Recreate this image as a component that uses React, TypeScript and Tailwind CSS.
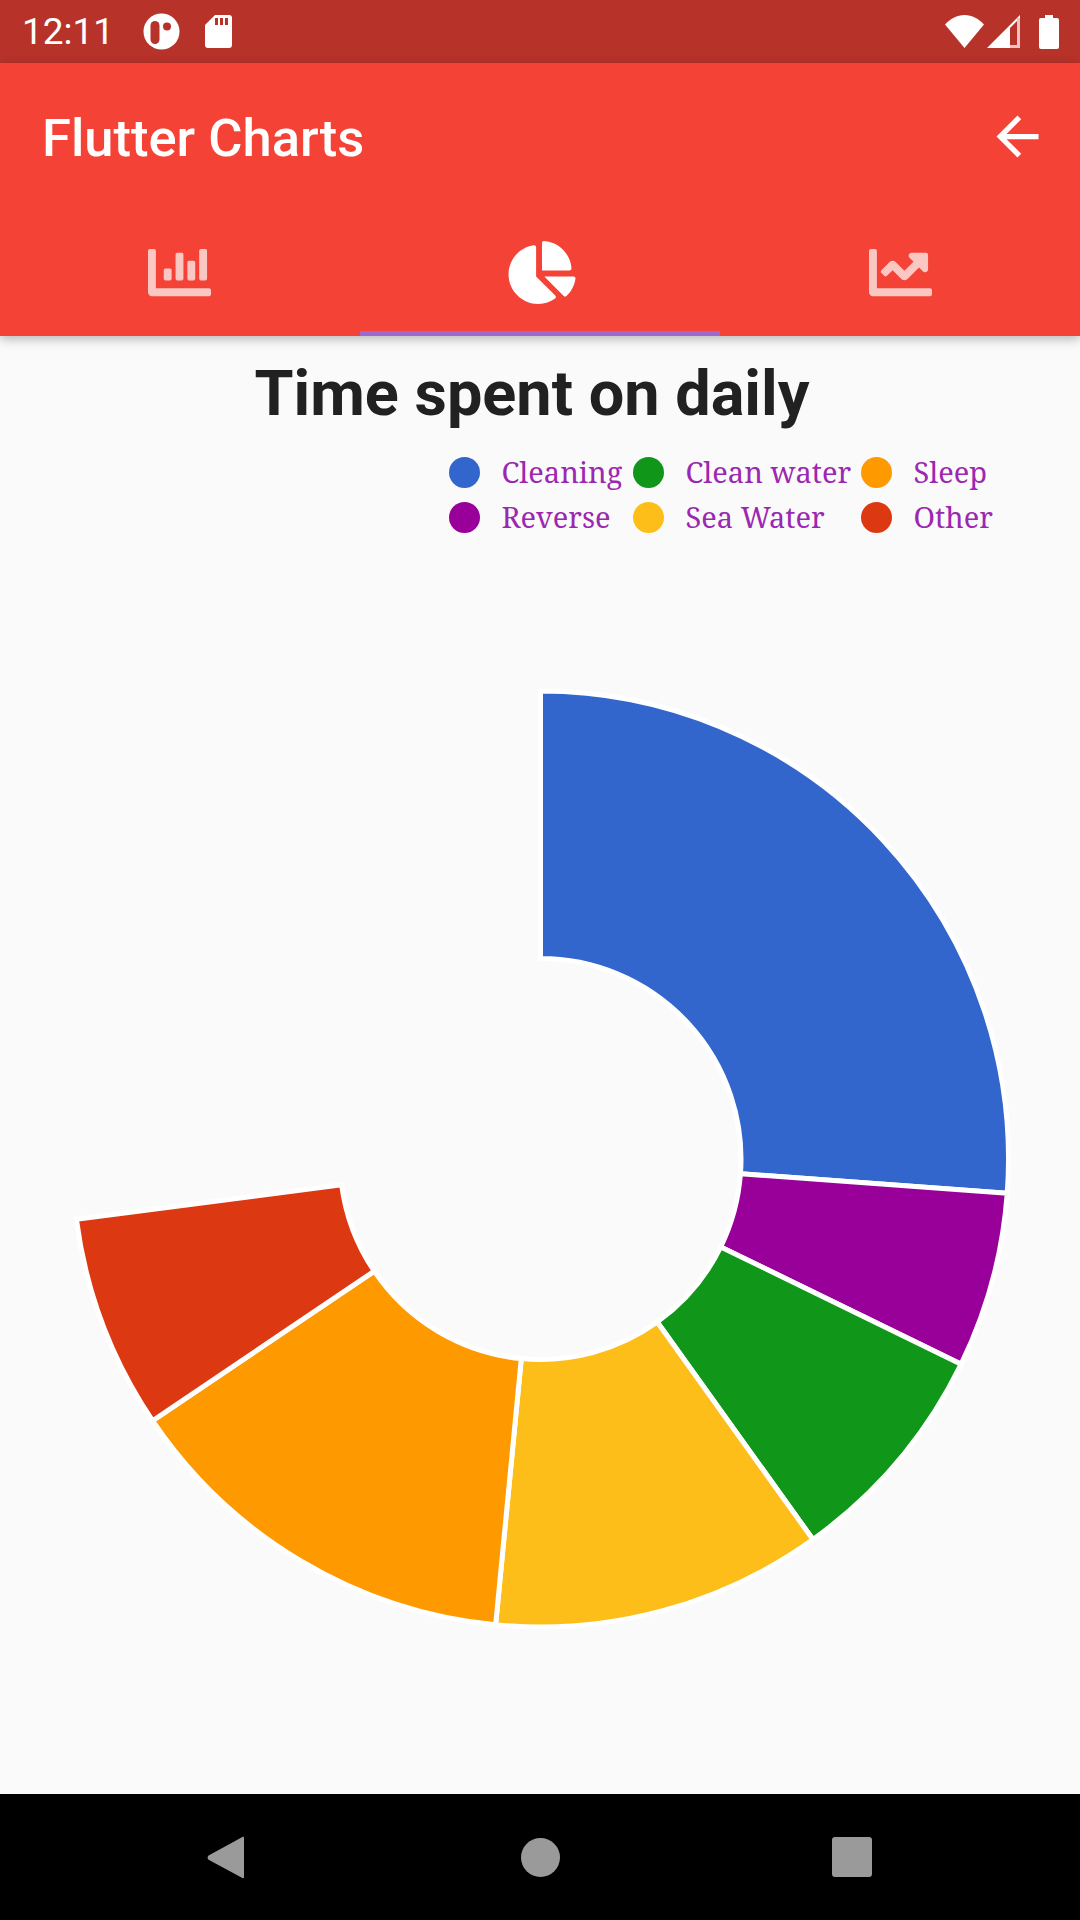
import React from 'react';
import { FaChartBar, FaChartLine, FaChartPie } from 'react-icons/fa';
import { MdArrowBack } from 'react-icons/md';

const CX = 540.5;
const CY = 478;
const OUTER = 468;
const INNER = 200.5;

const slices = [
  { label: 'Cleaning', color: '#3366cc', from: -90, to: 4.2 },
  { label: 'Reverse', color: '#990099', from: 4.2, to: 26 },
  { label: 'Clean water', color: '#109618', from: 26, to: 54.4 },
  { label: 'Sea Water', color: '#fdbe19', from: 54.4, to: 95.5 },
  { label: 'Sleep', color: '#ff9900', from: 95.5, to: 146 },
  { label: 'Other', color: '#dc3912', from: 146, to: 172.6 },
];

const legend = [
  { label: 'Cleaning', color: '#3366cc' },
  { label: 'Clean water', color: '#109618' },
  { label: 'Sleep', color: '#ff9900' },
  { label: 'Reverse', color: '#990099' },
  { label: 'Sea Water', color: '#fdbe19' },
  { label: 'Other', color: '#dc3912' },
];

const point = (r: number, deg: number) => {
  const a = (deg * Math.PI) / 180;
  return `${(CX + r * Math.cos(a)).toFixed(2)} ${(CY + r * Math.sin(a)).toFixed(2)}`;
};

const slicePath = (from: number, to: number) => {
  const large = to - from > 180 ? 1 : 0;
  return `M${point(INNER, from)} L${point(OUTER, from)} A${OUTER} ${OUTER} 0 ${large} 1 ${point(OUTER, to)} L${point(INNER, to)} A${INNER} ${INNER} 0 ${large} 0 ${point(INNER, from)} Z`;
};

const StatusBar = () => (
  <div className="h-[63px] bg-[#b73229] flex items-center pl-[22px] pr-[21px] text-white">
    <span className="font-['Roboto'] text-[37px] leading-none w-[121px]">12:11</span>
    <svg width="37" height="37" viewBox="0 0 37 37" className="mr-[25px]">
      <circle cx="18.5" cy="18.5" r="18" fill="#fff" />
      <rect x="7.5" y="8" width="9" height="23" rx="4.5" fill="#b73229" />
      <circle cx="24" cy="13.5" r="4" fill="#b73229" />
    </svg>
    <svg width="27" height="33" viewBox="0 0 27 33">
      <path d="M10 0h14a3 3 0 0 1 3 3v27a3 3 0 0 1-3 3H3a3 3 0 0 1-3-3V10z" fill="#fff" />
      <rect x="10" y="3" width="3" height="7" fill="#b73229" />
      <rect x="15" y="3" width="3" height="7" fill="#b73229" />
      <rect x="20" y="3" width="3" height="7" fill="#b73229" />
    </svg>
    <div className="ml-auto flex items-center">
      <svg width="39" height="33" viewBox="0 0 39 33" className="mr-[3px]">
        <path d="M19.5 33L0 9.5C5 4 12 0 19.5 0S34 4 39 9.5z" fill="#fff" />
      </svg>
      <svg width="33" height="33" viewBox="0 0 33 33" className="mr-[19px]">
        <path d="M33 0v33H0z" fill="#fff" />
        <path d="M23 13l7-7v24h-7z" fill="#b73229" />
        <path d="M30 3h3v30H23v-3h7z" fill="#eec4c0" />
      </svg>
      <svg width="20" height="34" viewBox="0 0 20 34">
        <path d="M6 0h8v3h4a2 2 0 0 1 2 2v27a2 2 0 0 1-2 2H2a2 2 0 0 1-2-2V5a2 2 0 0 1 2-2h4z" fill="#fff" />
      </svg>
    </div>
  </div>
);

const AppBar = () => (
  <div className="bg-[#f44336] text-white shadow-[0_3px_10px_rgba(0,0,0,0.28)] relative">
    <div className="h-[147px] flex items-center justify-between pl-[42px] pr-[31px]">
      <span className="font-['Roboto'] font-medium text-[52.5px] leading-none mt-[3px]">Flutter Charts</span>
      <MdArrowBack size={63} />
    </div>
    <div className="grid grid-cols-3 h-[126px]">
      <div className="flex items-center justify-center pb-[2px] pr-[2px]">
        <FaChartBar size={63} className="opacity-70" />
      </div>
      <div className="relative flex items-center justify-center pb-[2px] pl-[4px]">
        <FaChartPie className="w-[68px] h-[63px]" />
        <span className="absolute left-0 right-0 bottom-0 h-[5px] bg-[#9c69d1]" />
      </div>
      <div className="flex items-center justify-center pb-[2px]">
        <FaChartLine size={63} className="opacity-70" />
      </div>
    </div>
  </div>
);

const NavBar = () => (
  <div className="h-[126px] bg-black flex items-center pl-[207px]">
    <svg width="38" height="43" viewBox="0 0 38 43" className="mr-[276px]">
      <path d="M37 1.5v40a1 1 0 0 1-1.6.4L1.6 23.8a3 3 0 0 1 0-4.2L35.4 1a1 1 0 0 1 1.6.5z" fill="#9a9a9a" />
    </svg>
    <div className="w-[39px] h-[39px] rounded-full bg-[#9a9a9a] mr-[272px]" />
    <div className="w-[40px] h-[40px] rounded-[3px] bg-[#9a9a9a]" />
  </div>
);

export default function App() {
  return (
    <div className="w-[1080px] h-[1920px] flex flex-col bg-[#fafafa] overflow-hidden">
      <StatusBar />
      <AppBar />
      <main className="flex-1 flex flex-col">
        <h1 className="font-['Roboto'] font-bold text-[63px] leading-none text-[#212121] text-center pr-[16px] pt-[26px]">
          Time spent on daily
        </h1>
        <div className="grid grid-cols-[184px_228px_auto] gap-y-[14px] ml-[449px] mt-[32px]">
          {legend.map((item) => (
            <div key={item.label} className="flex items-center gap-[21.5px] h-[31px]">
              <span className="w-[31px] h-[31px] rounded-full shrink-0" style={{ backgroundColor: item.color }} />
              <span className="font-['Noto_Serif','DejaVu_Serif',serif] text-[29px] leading-none text-[#9c27b0] whitespace-nowrap pb-[2px]">
                {item.label}
              </span>
            </div>
          ))}
        </div>
        <svg width="1080" height="960" viewBox="0 0 1080 960" className="block mt-[148px]">
          {slices.map((s) => (
            <path key={s.label} d={slicePath(s.from, s.to)} fill={s.color} stroke="#fff" strokeWidth="5" />
          ))}
        </svg>
      </main>
      <NavBar />
    </div>
  );
}
